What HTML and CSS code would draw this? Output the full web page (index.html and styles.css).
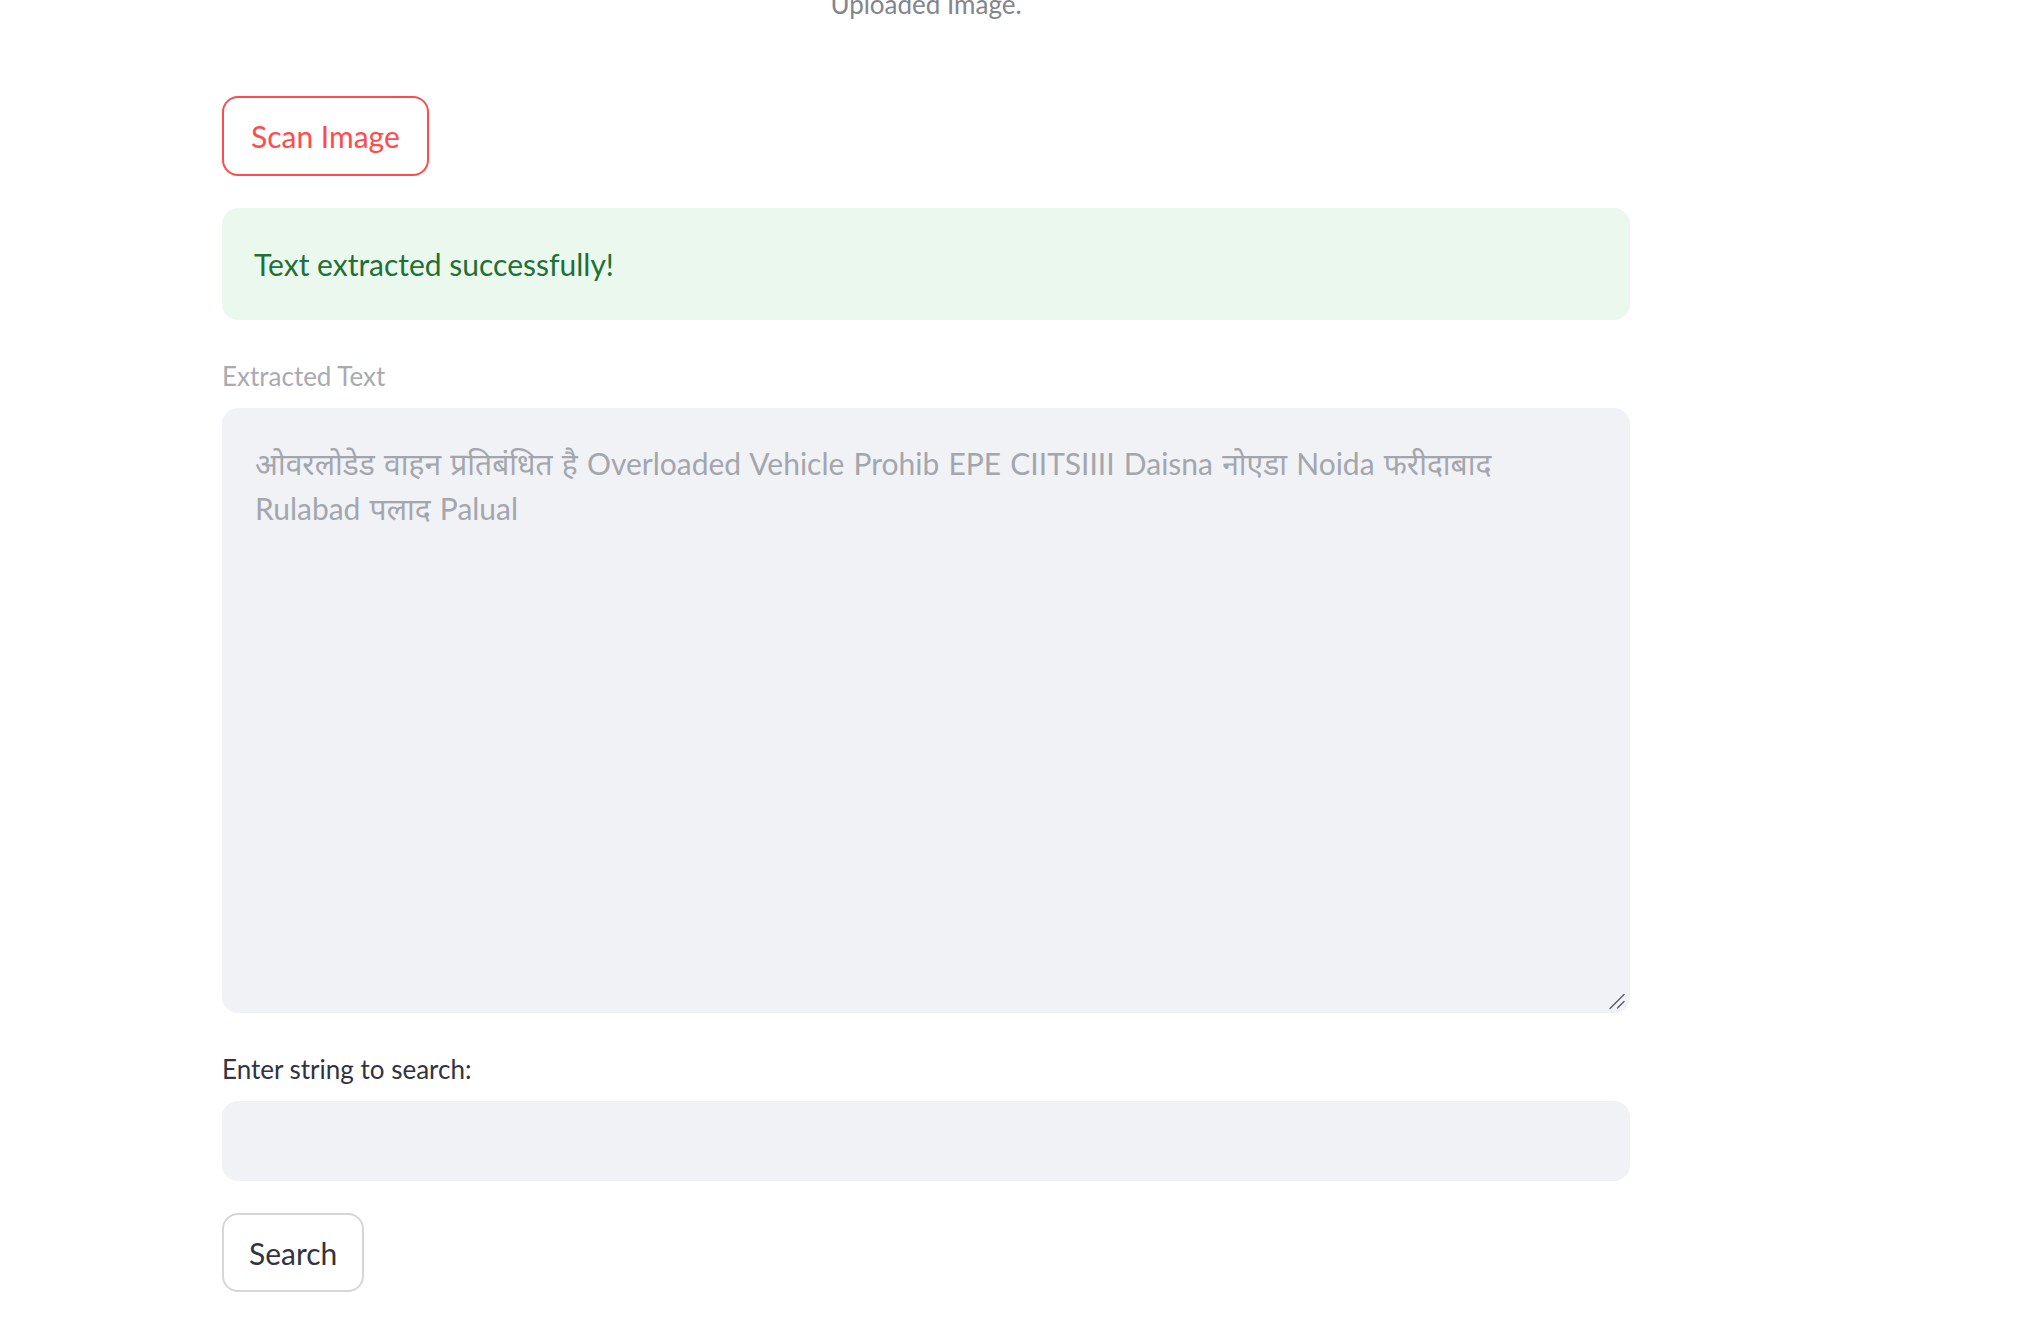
FILE: index.html
```html
<!DOCTYPE html>
<html lang="en">
<head>
<meta charset="utf-8">
<title>Scan Image</title>
<link rel="stylesheet" href="styles.css">
</head>
<body>
<main class="main">
  <div class="caption">Uploaded Image.</div>
  <div class="row"><button class="btn btn-primary" type="button">Scan Image</button></div>
  <div class="alert-success">Text extracted successfully!</div>
  <div class="field">
    <label class="label label-disabled" for="extracted">Extracted Text</label>
    <div class="textarea-wrap">
      <textarea id="extracted" class="textarea" readonly>ओवरलोडेड वाहन प्रतिबंधित है Overloaded Vehicle Prohib EPE CIITSIIII Daisna नोएडा Noida फरीदाबाद Rulabad पलाद Palual</textarea>
      <svg class="resizer" width="20" height="20" viewBox="0 0 20 20" aria-hidden="true">
        <path d="M2 17.5 L16 3.5 M9.5 17 L16 10.5" stroke="#5a5b62" stroke-width="1.4" stroke-linecap="round" fill="none"/>
      </svg>
    </div>
  </div>
  <div class="field">
    <label class="label" for="search">Enter string to search:</label>
    <input id="search" class="input" type="text">
  </div>
  <div class="row"><button class="btn btn-secondary" type="button">Search</button></div>
</main>
</body>
</html>
```
FILE: styles.css
```css
html, body {
  margin: 0;
  padding: 0;
  background: #ffffff;
  overflow: hidden;
}
body {
  font-family: "Lato", "Noto Sans", sans-serif;
  color: #31333f;
}
.main {
  width: 1408px;
  margin-left: 222px;
  display: flex;
  flex-direction: column;
  gap: 32px;
}
.caption {
  margin-top: -12px;
  margin-bottom: 44px;
  height: 32px;
  line-height: 32px;
  font-size: 26px;
  text-align: center;
  color: #83858d;
}
.row {
  display: flex;
}
.btn {
  box-sizing: border-box;
  height: 80px;
  padding: 0 25px;
  border-radius: 16px;
  background: #ffffff;
  font-family: "Lato", "Noto Sans", sans-serif;
  font-size: 30px;
  display: inline-flex;
  align-items: center;
  cursor: pointer;
}
.btn-primary {
  padding: 0 27px;
  border: 2px solid #ff4b4b;
  color: #ff4b4b;
}
.btn-secondary {
  height: 79px;
  border: 2px solid #d6d6d9;
  color: #31333f;
}
.alert-success {
  box-sizing: border-box;
  height: 112px;
  padding: 0 32px;
  border-radius: 16px;
  background: #ebf8ee;
  color: #1f6f36;
  font-size: 30px;
  display: flex;
  align-items: center;
}
.field {
  display: flex;
  flex-direction: column;
}
.label {
  min-height: 48px;
  margin-bottom: 8px;
  display: flex;
  align-items: center;
  font-size: 26px;
  color: #31333f;
}
.label-disabled {
  color: #a9aab0;
}
.textarea-wrap {
  position: relative;
  display: flex;
}
.textarea {
  box-sizing: border-box;
  width: 100%;
  height: 605px;
  padding: 33px 48px 32px 33px;
  border: none;
  outline: none;
  border-radius: 16px;
  background: #f0f2f6;
  color: #a4a6ad;
  font-family: "Lato", "Noto Sans", sans-serif;
  font-size: 30px;
  line-height: 45px;
  word-spacing: 1.5px;
  resize: none;
  cursor: not-allowed;
}
.resizer {
  position: absolute;
  right: 2px;
  bottom: 2px;
  pointer-events: none;
}
.input {
  box-sizing: border-box;
  width: 100%;
  height: 80px;
  padding: 0 32px;
  border: none;
  outline: none;
  border-radius: 16px;
  background: #f0f2f6;
  font-family: "Lato", "Noto Sans", sans-serif;
  font-size: 30px;
  color: #31333f;
}
```
